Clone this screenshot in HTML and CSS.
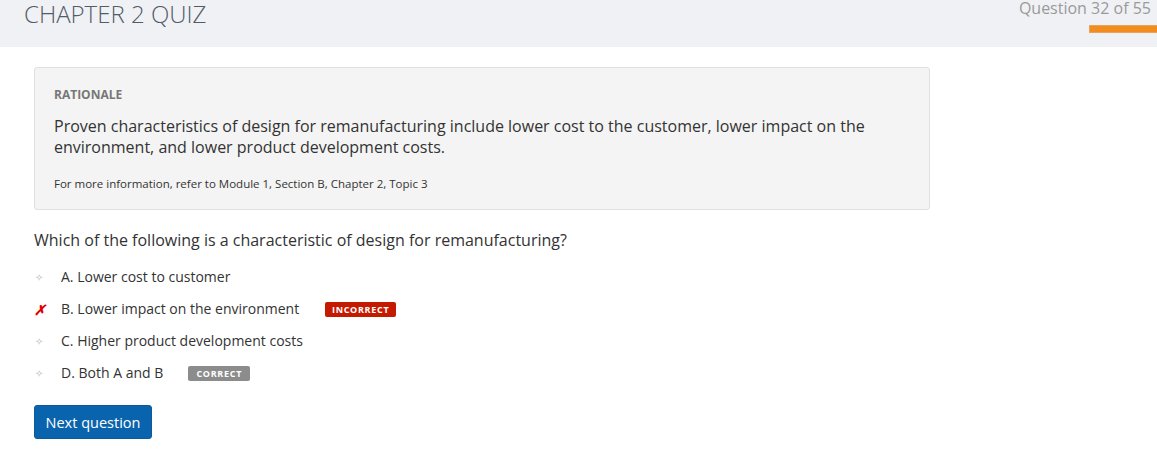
FILE: index.html
```html
<!DOCTYPE html>
<html>
<head>
<meta charset="utf-8">
<link rel="stylesheet" href="styles.css">
</head>
<body>
<header class="topbar">
  <h1 class="title">CHAPTER 2 QUIZ</h1>
  <div class="progress">
    <div class="progress-label">Question 32 of 55</div>
    <div class="progress-bar"></div>
  </div>
</header>
<main class="content">
  <section class="rationale">
    <div class="rationale-head">RATIONALE</div>
    <p class="rationale-text">Proven characteristics of design for remanufacturing include lower cost to the customer, lower impact on the environment, and lower product development costs.</p>
    <p class="rationale-ref">For more information, refer to Module 1, Section B, Chapter 2, Topic 3</p>
  </section>
  <p class="question">Which of the following is a characteristic of design for remanufacturing?</p>
  <ul class="options">
    <li class="option"><span class="mark dot">✧</span><span class="opt-text">A. Lower cost to customer</span></li>
    <li class="option"><span class="mark cross">✗</span><span class="opt-text">B. Lower impact on the environment</span><span class="badge badge-wrong">INCORRECT</span></li>
    <li class="option"><span class="mark dot">✧</span><span class="opt-text">C. Higher product development costs</span></li>
    <li class="option"><span class="mark dot">✧</span><span class="opt-text">D. Both A and B</span><span class="badge badge-right">CORRECT</span></li>
  </ul>
  <button class="next-btn">Next question</button>
</main>
</body>
</html>
```

FILE: styles.css
```css
* { box-sizing: border-box; }
html, body { margin: 0; padding: 0; background: #fff; }
body { font-family: "Open Sans", "Liberation Sans", sans-serif; color: #333; }

.topbar {
  height: 47px;
  background: #f0f1f4;
  display: flex;
  justify-content: space-between;
  align-items: flex-start;
  padding: 0 0 0 24px;
}
.title {
  margin: 0;
  font-weight: 300;
  font-size: 24px;
  line-height: 27px;
  color: #515c69;
  letter-spacing: 0;
}
.progress {
  display: flex;
  flex-direction: column;
  align-items: flex-end;
}
.progress-label {
  font-size: 16px;
  line-height: 16px;
  color: #9a9a9a;
  padding-right: 6px;
}
.progress-bar {
  margin-top: 9px;
  width: 68px;
  height: 8px;
  background: #f28c1e;
  border: 1px solid #e5a45a;
  border-right: none;
}

.content {
  padding: 20px 34px 0 34px;
}
.rationale {
  width: 896px;
  background: #f4f4f4;
  border: 1px solid #e0e0e0;
  border-radius: 3px;
  padding: 19px 19px 17px 19px;
}
.rationale-head {
  font-size: 12px;
  font-weight: 700;
  color: #777;
  line-height: 16px;
}
.rationale-text {
  margin: 13px 0 0 0;
  font-size: 16px;
  line-height: 21px;
  color: #333;
}
.rationale-ref {
  margin: 18px 0 0 0;
  font-size: 11.5px;
  line-height: 16px;
  color: #333;
}
.question {
  margin: 18px 0 0 0;
  font-size: 16px;
  line-height: 24px;
  color: #333;
}
.options {
  list-style: none;
  margin: 9px 0 0 0;
  padding: 0;
}
.option {
  display: flex;
  align-items: center;
  height: 32px;
  font-size: 14px;
  color: #333;
}
.mark {
  width: 27px;
  padding-left: 1px;
  font-size: 10px;
  color: #bbb;
}
.mark.cross {
  font-size: 14px;
  color: #e00000;
  font-weight: 700;
  font-style: italic;
  padding-left: 0;
}
.opt-text { line-height: 20px; }
.badge {
  display: inline-block;
  font-size: 9px;
  font-weight: 700;
  letter-spacing: 0.7px;
  color: #fff;
  line-height: 15px;
  height: 15px;
  border-radius: 2px;
  text-align: center;
}
.badge-wrong {
  background: #c41a00;
  margin-left: 26px;
  width: 71px;
}
.badge-right {
  background: #8c8c8c;
  margin-left: 25px;
  width: 62px;
}
.next-btn {
  margin-top: 16px;
  width: 118px;
  height: 34px;
  background: #0a64ad;
  color: #fff;
  border: 1px solid #0a5a9c;
  border-radius: 3px;
  font-family: "Open Sans", "Liberation Sans", sans-serif;
  font-size: 14.5px;
  padding: 0;
}
```
